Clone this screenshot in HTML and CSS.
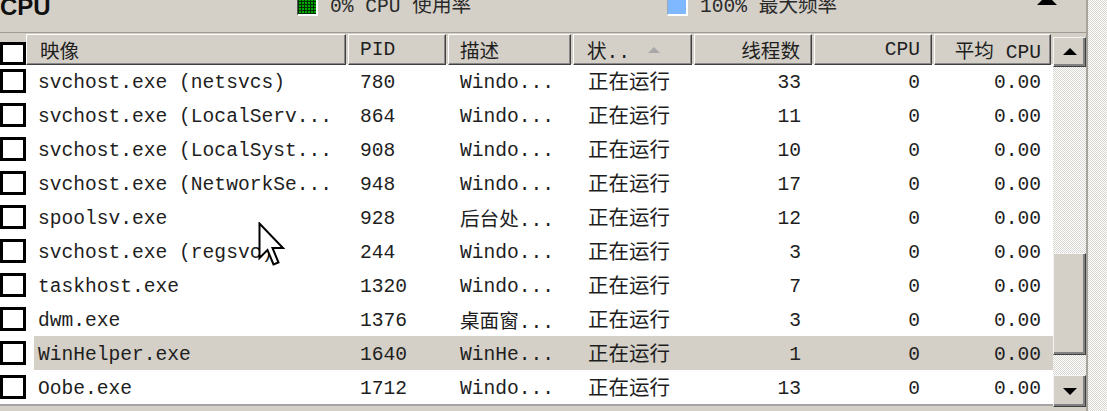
FILE: index.html
```html
<!DOCTYPE html>
<html lang="zh-CN">
<head>
<meta charset="utf-8">
<title>CPU</title>
<link rel="stylesheet" href="styles.css">
</head>
<body>
<div class="window">
  <div class="main">
    <div class="top">
      <div class="title">CPU</div>
      <div class="legend"><span class="swatch green"></span><span class="legend-text">0% CPU 使用率</span></div>
      <div class="legend"><span class="swatch blue"></span><span class="legend-text">100% 最大频率</span></div>
      <div class="collapse"></div>
    </div>
    <div class="list">
      <div class="table">
        <div class="head">
          <div class="hcb"><span class="cb"></span></div>
          <div class="hc left name-h">映像</div>
          <div class="hc left">PID</div>
          <div class="hc left">描述</div>
          <div class="hc left status-h">状..<span class="sort"></span></div>
          <div class="hc right">线程数</div>
          <div class="hc right">CPU</div>
          <div class="hc right avg-h">平均 CPU</div>
        </div>
        <div class="rows">
          <div class="row"><div class="cbc"><span class="cb"></span></div><div class="c name">svchost.exe (netsvcs)</div><div class="c pid">780</div><div class="c desc">Windo...</div><div class="c st">正在运行</div><div class="c thr">33</div><div class="c cpu">0</div><div class="c avg">0.00</div></div>
          <div class="row"><div class="cbc"><span class="cb"></span></div><div class="c name">svchost.exe (LocalServ...</div><div class="c pid">864</div><div class="c desc">Windo...</div><div class="c st">正在运行</div><div class="c thr">11</div><div class="c cpu">0</div><div class="c avg">0.00</div></div>
          <div class="row"><div class="cbc"><span class="cb"></span></div><div class="c name">svchost.exe (LocalSyst...</div><div class="c pid">908</div><div class="c desc">Windo...</div><div class="c st">正在运行</div><div class="c thr">10</div><div class="c cpu">0</div><div class="c avg">0.00</div></div>
          <div class="row"><div class="cbc"><span class="cb"></span></div><div class="c name">svchost.exe (NetworkSe...</div><div class="c pid">948</div><div class="c desc">Windo...</div><div class="c st">正在运行</div><div class="c thr">17</div><div class="c cpu">0</div><div class="c avg">0.00</div></div>
          <div class="row"><div class="cbc"><span class="cb"></span></div><div class="c name">spoolsv.exe</div><div class="c pid">928</div><div class="c desc cn">后台处...</div><div class="c st">正在运行</div><div class="c thr">12</div><div class="c cpu">0</div><div class="c avg">0.00</div></div>
          <div class="row"><div class="cbc"><span class="cb"></span></div><div class="c name">svchost.exe (regsvc)</div><div class="c pid">244</div><div class="c desc">Windo...</div><div class="c st">正在运行</div><div class="c thr">3</div><div class="c cpu">0</div><div class="c avg">0.00</div></div>
          <div class="row"><div class="cbc"><span class="cb"></span></div><div class="c name">taskhost.exe</div><div class="c pid">1320</div><div class="c desc">Windo...</div><div class="c st">正在运行</div><div class="c thr">7</div><div class="c cpu">0</div><div class="c avg">0.00</div></div>
          <div class="row"><div class="cbc"><span class="cb"></span></div><div class="c name">dwm.exe</div><div class="c pid">1376</div><div class="c desc cn">桌面窗...</div><div class="c st">正在运行</div><div class="c thr">3</div><div class="c cpu">0</div><div class="c avg">0.00</div></div>
          <div class="row sel"><div class="cbc"><span class="cb"></span></div><div class="c name">WinHelper.exe</div><div class="c pid">1640</div><div class="c desc">WinHe...</div><div class="c st">正在运行</div><div class="c thr">1</div><div class="c cpu">0</div><div class="c avg">0.00</div></div>
          <div class="row"><div class="cbc"><span class="cb"></span></div><div class="c name">Oobe.exe</div><div class="c pid">1712</div><div class="c desc">Windo...</div><div class="c st">正在运行</div><div class="c thr">13</div><div class="c cpu">0</div><div class="c avg">0.00</div></div>
        </div>
      </div>
      <div class="vscroll">
        <div class="sbtn"><span class="tri-up"></span></div>
        <div class="track t1"></div>
        <div class="thumb"></div>
        <div class="track t2"></div>
        <div class="sbtn down"><span class="tri-down"></span></div>
      </div>
    </div>
  </div>
  <div class="edge"></div>
</div>
<svg class="cursor" width="28" height="46" viewBox="0 0 28 46">
  <path d="M1.5 1.5 L1.5 36 L9.5 28 L15.5 42.5 L20.5 40.5 L14.5 26 L25 26 Z" fill="#fff" stroke="#000" stroke-width="2" stroke-linejoin="miter"/>
</svg>
</body>
</html>
```

FILE: styles.css
```css
* { box-sizing: border-box; }

html, body {
  margin: 0;
  padding: 0;
}

body {
  width: 1107px;
  height: 411px;
  overflow: hidden;
  background: #d4d0c8;
  font-family: "Liberation Mono", "Noto Sans CJK SC", monospace;
  font-size: 19.6px;
  color: #1e1e1e;
  position: relative;
}

.window {
  display: flex;
  height: 411px;
}

.main {
  width: 1086px;
  display: flex;
  flex-direction: column;
}

.edge {
  flex: 1;
  border-left: 2px solid #a6a39c;
  background: repeating-conic-gradient(#ffffff 0 25%, #d8d6d0 0 50%) 0 0 / 2px 2px;
}

/* top legend bar */
.top {
  height: 33px;
  border-bottom: 1px solid #a09c94;
  display: grid;
  grid-template-columns: 297px 370px 370px auto;
  align-items: start;
  overflow: hidden;
}

.title, .legend, .collapse {
  margin-top: -5px;
}

.title {
  font-family: "Liberation Sans", Arial, sans-serif;
  font-weight: bold;
  font-size: 24px;
  line-height: 24px;
  color: #101010;
}

.legend {
  display: flex;
  align-items: flex-start;
  gap: 12px;
  line-height: 24px;
  color: #2a2a2a;
}

.swatch {
  width: 21px;
  height: 21px;
  border-right: 2px solid #fff;
  border-bottom: 2px solid #fff;
  border-left: 1px solid #555;
}

.swatch.green {
  background-color: #00a800;
  background-image:
    linear-gradient(90deg, #003000 1px, transparent 1px),
    linear-gradient(#003000 1px, transparent 1px);
  background-size: 3px 3px;
}

.swatch.blue {
  background: #7fb8ff;
  border-left-color: #9ab;
}

.collapse {
  width: 0;
  height: 0;
  border-left: 10px solid transparent;
  border-right: 10px solid transparent;
  border-bottom: 10px solid #000;
}

/* list */
.list {
  display: flex;
  padding-top: 1px;
}

.table {
  width: 1053px;
}

.head {
  display: grid;
  grid-template-columns: 26px 322px 100px 125px 121px 120px 120px 119px;
  height: 28px;
  margin-bottom: 2px;
}

.hcb {
  display: flex;
  align-items: flex-end;
}

.hcb .cb {
  height: 23px;
}

.hc {
  margin-right: 2px;
  background: #d4d0c8;
  border-top: 1px solid #fff;
  border-left: 1px solid #fff;
  border-right: 1px solid #404040;
  border-bottom: 1px solid #404040;
  box-shadow: inset -1px -1px 0 #888;
  display: flex;
  align-items: center;
  white-space: nowrap;
  color: #1e1e1e;
}

.hc.left { padding-left: 11px; }
.hc.name-h { padding-left: 13px; }
.hc.status-h { padding-left: 13px; }
.hc.right { justify-content: flex-end; padding-right: 11px; }
.hc.avg-h { padding-right: 9px; }

.sort {
  margin-left: 18px;
  width: 0;
  height: 0;
  border-left: 6px solid transparent;
  border-right: 6px solid transparent;
  border-bottom: 6px solid #a8a8a8;
}

.rows {
  background: #fff;
  border-bottom: 2px solid #a4a4a4;
}

.row {
  display: grid;
  grid-template-columns: 34px 314px 100px 125px 121px 120px 120px 119px;
  height: 34px;
}

.cbc {
  display: flex;
  align-items: center;
}

.cb {
  display: block;
  width: 26px;
  height: 24px;
  border: 3px solid #000;
  background: #fff;
}

.c {
  display: flex;
  align-items: center;
  white-space: nowrap;
  overflow: hidden;
  padding-top: 4px;
}

.row.sel .c { background: #d4d0c8; }

.name { padding-left: 4px; }
.pid { padding-left: 12px; }
.desc { padding-left: 12px; }
.desc.cn { padding-top: 1px; }
.st { padding-left: 15px; font-size: 20.5px; padding-top: 0; padding-bottom: 2px; }
.thr { justify-content: flex-end; padding-right: 13px; }
.cpu { justify-content: flex-end; padding-right: 14px; }
.avg { justify-content: flex-end; padding-right: 12px; }

/* scrollbar */
.vscroll {
  width: 33px;
  margin-top: 3px;
  display: flex;
  flex-direction: column;
}

.sbtn {
  height: 30px;
  background: #d4d0c8;
  border-top: 1px solid #f4f4f4;
  border-left: 1px solid #f4f4f4;
  border-right: 1px solid #404040;
  border-bottom: 1px solid #404040;
  box-shadow: inset -2px -2px 0 #808080;
  display: flex;
  align-items: center;
  justify-content: center;
}

.sbtn.down { height: 32px; }

.tri-up {
  width: 0; height: 0;
  border-left: 7px solid transparent;
  border-right: 7px solid transparent;
  border-bottom: 7px solid #000;
  margin-top: -2px;
}

.tri-down {
  width: 0; height: 0;
  border-left: 7px solid transparent;
  border-right: 7px solid transparent;
  border-top: 7px solid #000;
}

.track {
  background: repeating-conic-gradient(#ffffff 0 25%, #d8d6d0 0 50%) 0 0 / 2px 2px;
}

.t1 { height: 186px; }
.t2 { height: 20px; }

.thumb {
  height: 102px;
  background: #d4d0c8;
  border-top: 1px solid #f4f4f4;
  border-left: 1px solid #f4f4f4;
  border-right: 1px solid #404040;
  border-bottom: 1px solid #404040;
  box-shadow: inset -2px -2px 0 #808080;
}

/* mouse pointer overlay */
.cursor {
  position: absolute;
  left: 258px;
  top: 222px;
}
```
